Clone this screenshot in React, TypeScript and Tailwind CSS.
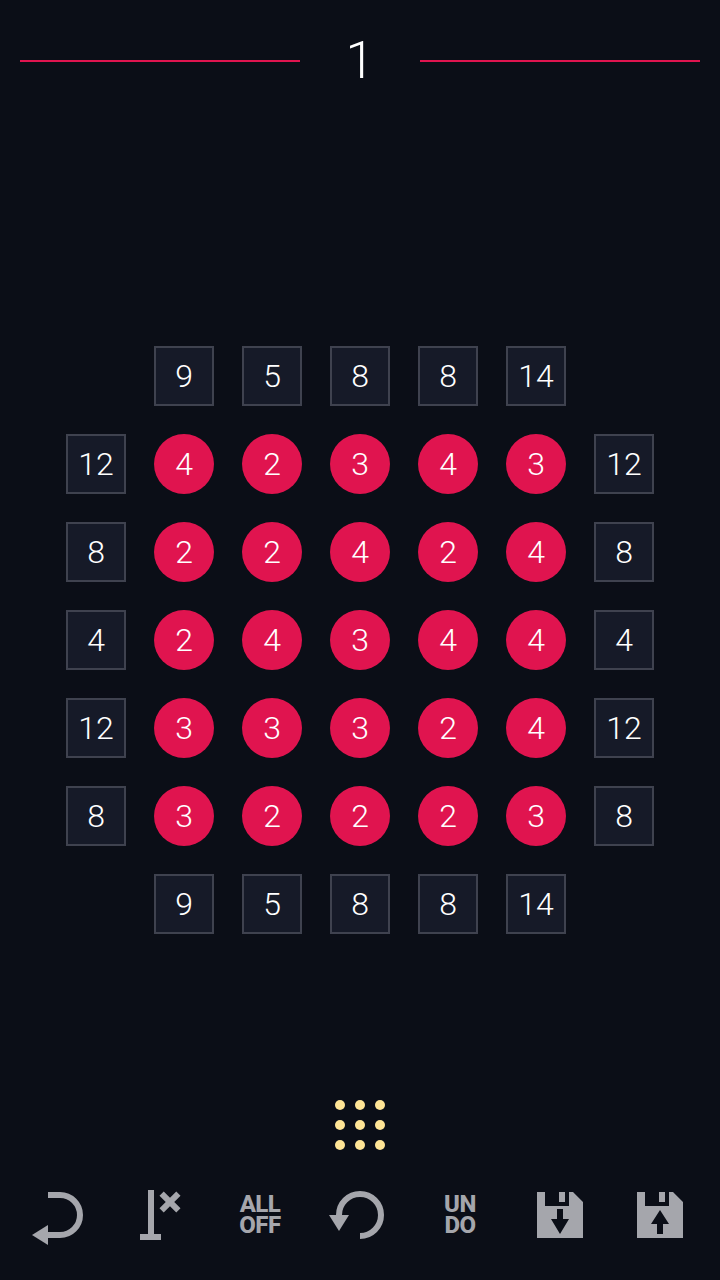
const TOP = [9, 5, 8, 8, 14];
const ROWS = [
  { side: 12, cells: [4, 2, 3, 4, 3] },
  { side: 8, cells: [2, 2, 4, 2, 4] },
  { side: 4, cells: [2, 4, 3, 4, 4] },
  { side: 12, cells: [3, 3, 3, 2, 4] },
  { side: 8, cells: [3, 2, 2, 2, 3] },
];

function Clue({ value }: { value: number }) {
  return (
    <div className="flex h-[60px] w-[60px] items-center justify-center border-2 border-[#3f424f] bg-[#161a28]">
      {value}
    </div>
  );
}

function Cell({ value }: { value: number }) {
  return (
    <div className="flex h-[60px] w-[60px] items-center justify-center rounded-full bg-[#e0144f]">
      {value}
    </div>
  );
}

function Spacer() {
  return <div className="h-[60px] w-[60px]" />;
}

function Floppy({ up }: { up?: boolean }) {
  return (
    <svg width="60" height="64" viewBox="0 0 60 64" fill="#a5a6ac">
      <path d="M7 9H15V23H39V9H43L53 19V55H7Z" />
      <rect x="29" y="9" width="6" height="10" />
      {up ? (
        <path d="M30 27L39 41H33V51H27V41H21Z" fill="#0b0e17" />
      ) : (
        <path d="M27 26H33V36H39L30 51L21 36H27Z" fill="#0b0e17" />
      )}
    </svg>
  );
}

function WordIcon({ top, bottom }: { top: string; bottom: string }) {
  return (
    <div className="flex h-[64px] w-[60px] flex-col items-center justify-center font-['Roboto',sans-serif] text-[24px] leading-[21px] font-extrabold tracking-[-0.5px] text-[#a5a6ac]">
      <span>{top}</span>
      <span>{bottom}</span>
    </div>
  );
}

export default function App() {
  return (
    <div className="flex h-[1280px] w-[720px] flex-col items-center bg-[#0b0e17] font-['Roboto',sans-serif] text-[32px] font-light text-white">
      <div className="flex h-[122px] w-full items-center gap-[40px] px-[20px]">
        <div className="h-[2px] flex-1 bg-[#e0144f]" />
        <div className="w-[40px] text-center text-[52px] leading-none">1</div>
        <div className="h-[2px] flex-1 bg-[#e0144f]" />
      </div>

      <div className="mt-[224px] grid grid-cols-[repeat(7,60px)] gap-[28px]">
        <Spacer />
        {TOP.map((v, i) => (
          <Clue key={i} value={v} />
        ))}
        <Spacer />
        {ROWS.map((row, r) =>
          [row.side, ...row.cells, row.side].map((v, c) =>
            c === 0 || c === 6 ? <Clue key={`${r}-${c}`} value={v} /> : <Cell key={`${r}-${c}`} value={v} />,
          ),
        )}
        <Spacer />
        {TOP.map((v, i) => (
          <Clue key={i} value={v} />
        ))}
        <Spacer />
      </div>

      <div className="mt-[166px] grid grid-cols-3 gap-[10px]">
        {Array.from({ length: 9 }).map((_, i) => (
          <div key={i} className="h-[10px] w-[10px] rounded-full bg-[#ffe596]" />
        ))}
      </div>

      <div className="mt-[33px] grid grid-cols-[repeat(7,100px)] justify-items-center">
        <svg width="60" height="64" viewBox="0 0 60 64" fill="none">
          <path d="M18 12H30A20 20 0 0 1 30 52H18" stroke="#a5a6ac" strokeWidth="6" />
          <path d="M2 52L18 42V62Z" fill="#a5a6ac" />
        </svg>
        <svg width="60" height="64" viewBox="0 0 60 64" fill="none">
          <path d="M21 7V54M10 54H31" stroke="#a5a6ac" strokeWidth="6" />
          <path d="M31.6 10.6L48.4 27.4M48.4 10.6L31.6 27.4" stroke="#a5a6ac" strokeWidth="6" />
        </svg>
        <WordIcon top="ALL" bottom="OFF" />
        <svg className="overflow-visible" width="60" height="64" viewBox="0 0 60 64" fill="none">
          <path d="M9 32A21 21 0 1 1 30 53" stroke="#a5a6ac" strokeWidth="6" />
          <path d="M-1 32H19L9 48Z" fill="#a5a6ac" />
        </svg>
        <WordIcon top="UN" bottom="DO" />
        <Floppy />
        <Floppy up />
      </div>
    </div>
  );
}
